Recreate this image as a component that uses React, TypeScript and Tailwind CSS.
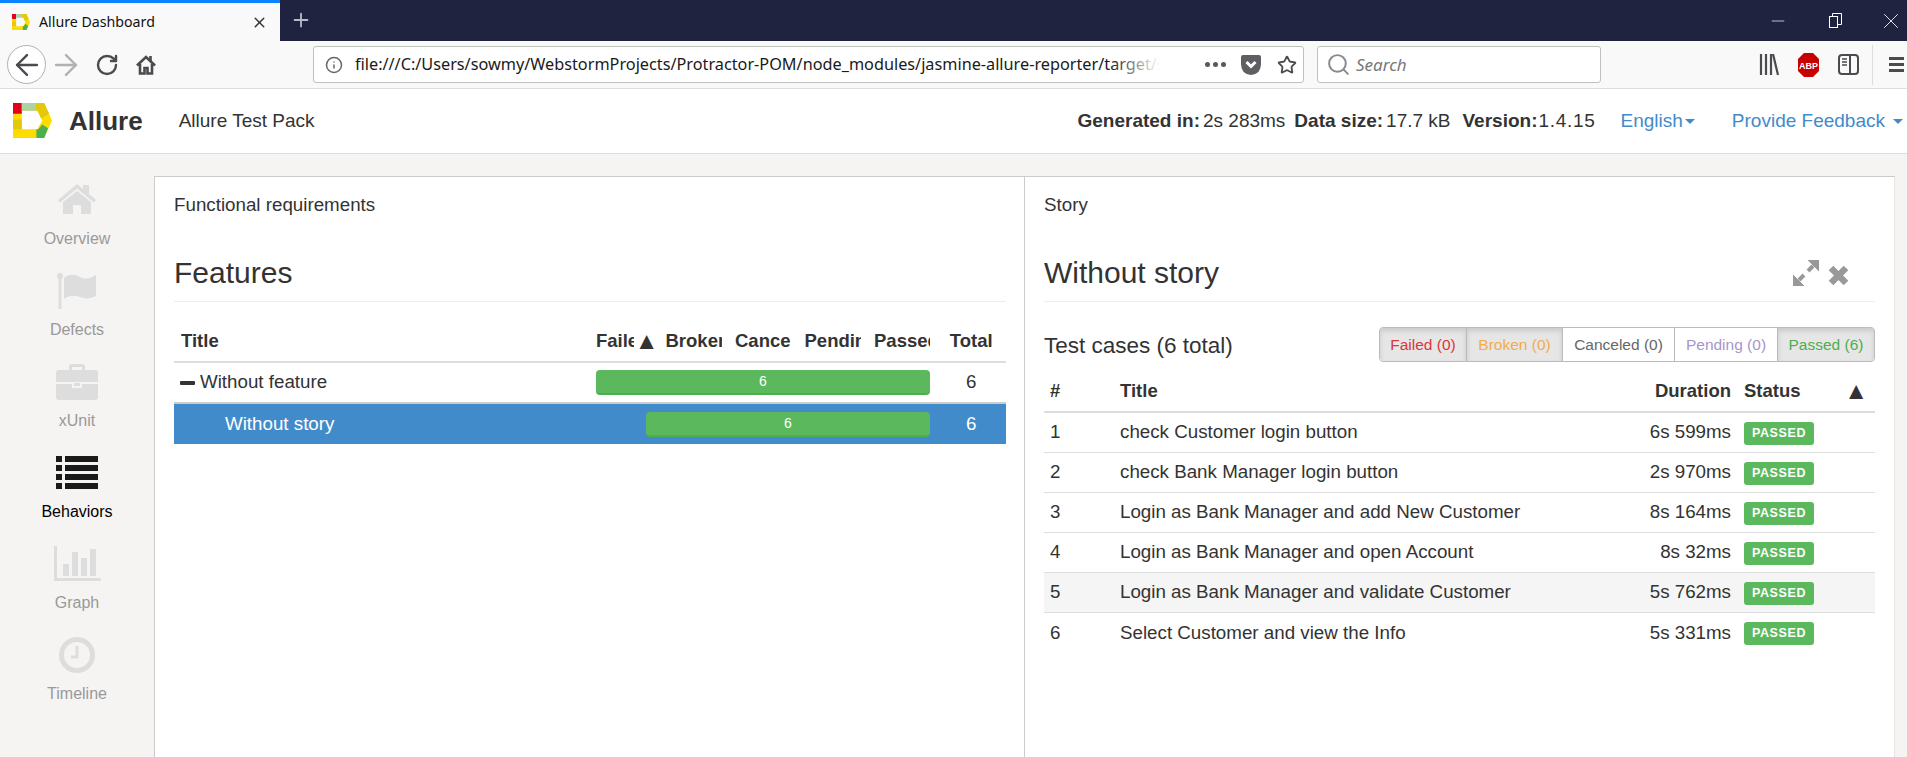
import { ArrowLeft, ArrowRight, RotateCw, Star, Search, Info, X, Plus, Minus } from 'lucide-react';

const sans = 'font-["Liberation_Sans",Arial,sans-serif]';

const cases = [
  ['1', 'check Customer login button', '6s 599ms'],
  ['2', 'check Bank Manager login button', '2s 970ms'],
  ['3', 'Login as Bank Manager and add New Customer', '8s 164ms'],
  ['4', 'Login as Bank Manager and open Account', '8s 32ms'],
  ['5', 'Login as Bank Manager and validate Customer', '5s 762ms'],
  ['6', 'Select Customer and view the Info', '5s 331ms'],
];

function Logo({ size }: { size: number }) {
  return (
    <svg width={size} height={size * 0.9} viewBox="0 0 40 36" className="shrink-0">
      <path d="M0 0 H32 L40 18 L32 36 H0 Z M9 8 V27 H25 L30 18 L25 8 Z" fill="#ffdc00" fillRule="evenodd" />
      <rect x="0" y="17" width="9" height="10" fill="#e3c80e" />
      <rect x="0" y="0" width="9" height="11" fill="#e3001b" />
      <rect x="9" y="0" width="14" height="8" fill="#aed2a8" />
      <polygon points="23,0 32,0 37,11 29,16 25,8 23,8" fill="#e3c80e" />
      <polygon points="24,36 24,27 26,27 30,22 36,26 32,36" fill="#4caf50" />
    </svg>
  );
}

function HomeIcon() {
  return (
    <svg width="38" height="31" viewBox="0 0 38 31" fill="#dddddd">
      <polygon points="0,16 19,0 25,5 25,1 31,1 31,10 38,16 36,18.5 19,4.5 2,18.5" />
      <path d="M5 18 L19 7 L33 18 V30 H23 V21 H15 V30 H5 Z" />
    </svg>
  );
}

function FlagIcon() {
  return (
    <svg width="40" height="36" viewBox="0 0 40 36" fill="#dddddd">
      <circle cx="3" cy="3" r="3" />
      <rect x="1.5" y="3" width="3" height="33" />
      <path d="M7 5 C12 1 18 1 23 4 C29 7 34 5 39 2 V23 C33 26 28 26 23 24 C17 22 12 22 7 26 Z" />
    </svg>
  );
}

function CaseIcon() {
  return (
    <svg width="42" height="36" viewBox="0 0 42 36" fill="#dddddd">
      <path d="M13 7 V3 Q13 0 16 0 H26 Q29 0 29 3 V7 H26 V3 H16 V7 Z" />
      <path d="M3 6 H39 Q42 6 42 9 V18 H0 V9 Q0 6 3 6 Z" />
      <path d="M0 20 H16 V24 H26 V20 H42 V33 Q42 36 39 36 H3 Q0 36 0 33 Z" />
      <rect x="18" y="19" width="6" height="3" />
    </svg>
  );
}

function ListIcon() {
  return (
    <svg width="42" height="33" viewBox="0 0 42 33" fill="#1a1a1a">
      {[0, 9, 18, 27].map((y) => (
        <g key={y}>
          <rect x="0" y={y} width="6" height="6" />
          <rect x="9" y={y} width="33" height="6" />
        </g>
      ))}
    </svg>
  );
}

function GraphIcon() {
  return (
    <svg width="47" height="35" viewBox="0 0 47 35" fill="#dddddd">
      <rect x="0" y="0" width="3" height="35" />
      <rect x="0" y="32" width="47" height="3" />
      <rect x="9" y="18" width="6" height="12" />
      <rect x="18" y="6" width="6" height="24" />
      <rect x="27" y="12" width="6" height="18" />
      <rect x="36" y="3" width="6" height="27" />
    </svg>
  );
}

function ClockIcon() {
  return (
    <svg width="36" height="36" viewBox="0 0 36 36" fill="none" stroke="#dddddd">
      <circle cx="18" cy="18" r="15.5" strokeWidth="5" />
      <path d="M18 9 V20 H12" strokeWidth="3" />
    </svg>
  );
}

function NavItem({ label, active, children }: { label: string; active?: boolean; children: React.ReactNode }) {
  return (
    <div className="flex h-[91px] flex-col items-center">
      <div className="flex h-[55px] items-center justify-center">{children}</div>
      <div className={`text-[16px] leading-[24px] ${active ? 'text-black' : 'text-[#999999]'}`}>{label}</div>
    </div>
  );
}

function Browser() {
  return (
    <>
      <div className="flex h-[41px] bg-[#20233f]">
        <div className="flex h-full w-[280px] items-center border-t-[3px] border-[#0a84ff] bg-[#f9f9fa] pl-[12px] pr-[12px]">
          <Logo size={18} />
          <span className='ml-[9px] flex-1 font-["Noto_Sans",sans-serif] text-[14.2px] text-[#111111]'>Allure Dashboard</span>
          <X size={17} className="text-[#333333]" />
        </div>
        <Plus size={22} className="ml-[10px] mt-[9px] text-[#b8bac6]" />
        <div className="ml-auto flex items-center pr-[3px] text-white">
          <Minus size={20} strokeWidth={0.85} />
          <svg width="13" height="15" viewBox="0 0 13 15" fill="none" stroke="white" className="ml-[41px]">
            <rect x="0.5" y="3.5" width="8" height="11" />
            <path d="M3.5 3 V0.5 H12.5 V11.5 H9" />
          </svg>
          <X size={26} strokeWidth={0.8} className="ml-[36px]" />
        </div>
      </div>
      <div className='flex h-[48px] items-center border-b border-[#dddddd] bg-[#f9f9fa] font-["Noto_Sans",sans-serif] text-[#4a4a4f]'>
        <div className="ml-[7px] flex h-[39px] w-[39px] items-center justify-center rounded-full border border-[#b1b1b3] bg-white">
          <ArrowLeft size={34} strokeWidth={1.7} />
        </div>
        <ArrowRight size={34} strokeWidth={1.7} className="ml-[3px] text-[#b1b1b3]" />
        <RotateCw size={24} strokeWidth={2.4} className="ml-[12px]" />
        <svg width="20" height="20" viewBox="0 0 20 20" className="ml-[17px]" fill="none" stroke="#4a4a4f" strokeWidth="2.6">
          <path d="M1 10.5 L10 2 L19 10.5" />
          <path d="M14.5 1 V6" />
          <path d="M4 9 V18.5 H8.5 V13 H11.5 V18.5 H16 V9" />
        </svg>
        <div className="relative ml-[157px] flex h-[37px] w-[991px] items-center rounded-[3px] border border-[#c0c0c0] bg-white">
          <Info size={18} className="ml-[11px] shrink-0 text-[#666666]" />
          <div className="relative ml-[12px] w-[805px] overflow-hidden whitespace-nowrap text-[16.25px] text-[#1a1a1a]">
            file:///C:/Users/sowmy/WebstormProjects/Protractor-POM/node_modules/jasmine-allure-reporter/target/site
            <div className="absolute right-0 top-0 h-full w-[50px] bg-gradient-to-r from-transparent to-white" />
          </div>
          <div className="ml-[45px] flex gap-[3px]">
            <span className="h-[5px] w-[5px] rounded-full bg-[#5a5a5e]" />
            <span className="h-[5px] w-[5px] rounded-full bg-[#5a5a5e]" />
            <span className="h-[5px] w-[5px] rounded-full bg-[#5a5a5e]" />
          </div>
          <svg width="20" height="20" viewBox="0 0 20 20" className="ml-[15px]">
            <path d="M2 0 H18 Q20 0 20 2 V9 Q20 19 10 20 Q0 19 0 9 V2 Q0 0 2 0 Z" fill="#5f5f63" />
            <path d="M5.5 7 L10 11.5 L14.5 7" fill="none" stroke="white" strokeWidth="3" />
          </svg>
          <Star size={20} strokeWidth={2.2} className="ml-[16px]" />
        </div>
        <div className="ml-[13px] flex h-[37px] w-[284px] items-center rounded-[3px] border border-[#c0c0c0] bg-white">
          <Search size={25} strokeWidth={1.9} className="ml-[8px] text-[#8a8a8a]" />
          <span className="ml-[5px] text-[17px] italic text-[#777777]">Search</span>
        </div>
        <svg width="20" height="21" viewBox="0 0 20 21" className="ml-[158px]" fill="none" stroke="#4a4a4f" strokeWidth="2.2">
          <path d="M2 0 V21 M7 0 V21 M12 0 V21 M14 0 L19 21" />
        </svg>
        <svg width="21" height="24" viewBox="0 0 21 24" className="ml-[19px]">
          <polygon points="6,0 15,0 21,6 21,18 15,24 6,24 0,18 0,6" fill="#c70000" />
          <text x="10.5" y="15.5" textAnchor="middle" fontSize="9" fontWeight="700" fill="white" fontFamily="Liberation Sans">ABP</text>
        </svg>
        <svg width="21" height="21" viewBox="0 0 21 21" className="ml-[19px]" fill="none" stroke="#4a4a4f" strokeWidth="2">
          <rect x="1" y="1" width="19" height="19" rx="3" />
          <path d="M12 1 V20" />
          <path d="M4 5 H9 M4 8 H9 M4 11 H9" strokeWidth="1.5" />
        </svg>
        <div className="ml-[13px] h-[40px] w-px bg-[#dddddd]" />
        <div className="ml-[16px] flex w-[15px] flex-col gap-[3px]">
          <div className="h-[3px] w-full bg-[#4a4a4f]" />
          <div className="h-[3px] w-full bg-[#4a4a4f]" />
          <div className="h-[3px] w-full bg-[#4a4a4f]" />
        </div>
      </div>
    </>
  );
}

function Header() {
  return (
    <div className="flex h-[65px] items-center border-b border-[#dddddd] bg-white pl-[13px] text-[#333333]">
      <Logo size={39} />
      <span className="ml-[17px] text-[26px] font-bold">Allure</span>
      <span className="ml-[36px] text-[19px]">Allure Test Pack</span>
      <div className="ml-auto flex items-center pr-[4px] text-[19px]">
        <b>Generated in:</b>
        <span className="ml-[3px]">2s 283ms</span>
        <b className="ml-[9px]">Data size:</b>
        <span className="ml-[3px]">17.7 kB</span>
        <b className="ml-[12px]">Version:</b>
        <span className="ml-[1px] tracking-[0.7px]">1.4.15</span>
        <span className="ml-[25px] text-[#428bca]">English</span>
        <span className="ml-[2px] h-0 w-0 border-x-[5px] border-t-[5px] border-x-transparent border-t-[#428bca]" />
        <span className="ml-[37px] text-[#428bca]">Provide Feedback</span>
        <span className="ml-[8px] h-0 w-0 border-x-[5px] border-t-[5px] border-x-transparent border-t-[#428bca]" />
      </div>
    </div>
  );
}

function Sidebar() {
  return (
    <div className="w-[154px] shrink-0 pt-[18px]">
      <NavItem label="Overview"><HomeIcon /></NavItem>
      <NavItem label="Defects"><FlagIcon /></NavItem>
      <NavItem label="xUnit"><CaseIcon /></NavItem>
      <NavItem label="Behaviors" active><ListIcon /></NavItem>
      <NavItem label="Graph"><GraphIcon /></NavItem>
      <NavItem label="Timeline"><ClockIcon /></NavItem>
    </div>
  );
}

function PanelTitle({ crumb, title, children }: { crumb: string; title: string; children?: React.ReactNode }) {
  return (
    <>
      <div className="mt-[15px] h-[26px] leading-[26px]">{crumb}</div>
      <div className="flex h-[84px] items-end justify-between border-b border-[#eeeeee] pb-[10px]">
        <h2 className="text-[30px] leading-[36px]">{title}</h2>
        {children}
      </div>
    </>
  );
}

function Bar({ width }: { width: string }) {
  return (
    <div className={`ml-auto flex h-[25px] items-center justify-center rounded-[4px] border-b-2 border-[#4cae4c] bg-[#5cb85c] text-[14px] text-white ${width}`}>
      6
    </div>
  );
}

function Features() {
  const row = 'grid grid-cols-[415px_repeat(5,69.5px)_1fr]';
  return (
    <div className="w-[870px] shrink-0 border-r border-[#cccccc] pl-[19px] pr-[18px]">
      <PanelTitle crumb="Functional requirements" title="Features" />
      <div className={`${row} h-[61px] items-end border-b-2 border-[#dddddd] pb-[6px] text-[18.5px] font-bold`}>
        <div className="pl-[7px]">Title</div>
        <div className="flex items-center pl-[7px]">
          <span className="w-[38px] overflow-hidden">Failed</span>
          <span className="ml-[1px] text-[24px] leading-[26px]">▲</span>
        </div>
        <div className="w-[63px] overflow-hidden whitespace-nowrap pl-[7px]">Broken</div>
        <div className="w-[63px] overflow-hidden whitespace-nowrap pl-[7px]">Canceled</div>
        <div className="w-[63px] overflow-hidden whitespace-nowrap pl-[7px]">Pending</div>
        <div className="w-[63px] overflow-hidden whitespace-nowrap pl-[7px]">Passed</div>
        <div className="text-center">Total</div>
      </div>
      <div className={`${row} h-[39px] items-center`}>
        <div className="flex items-center pl-[6px]">
          <span className="h-[4px] w-[15px] rounded-[1px] bg-[#333333]" />
          <span className="ml-[5px]">Without feature</span>
        </div>
        <div className="col-span-5 pl-[7px] pr-[6.5px]"><Bar width="w-[334px]" /></div>
        <div className="text-center">6</div>
      </div>
      <div className={`${row} h-[42px] items-center border-t-2 border-[#cccccc] bg-[#428bca] text-white`}>
        <div className="pl-[51px]">Without story</div>
        <div className="col-span-5 pl-[7px] pr-[6.5px]"><Bar width="w-[284px]" /></div>
        <div className="text-center">6</div>
      </div>
    </div>
  );
}

function Filter({ label, color, on, last }: { label: string; color: string; on?: boolean; last?: boolean }) {
  return (
    <div className={`flex items-center justify-center text-[15.5px] ${color} ${on ? 'bg-[#e6e6e6] shadow-[inset_0_3px_5px_rgba(0,0,0,0.125)]' : 'bg-white'} ${last ? '' : 'border-r border-[#bbbbbb]'}`}>
      {label}
    </div>
  );
}

function Story() {
  const row = 'grid grid-cols-[70px_523px_100px_139px]';
  return (
    <div className="w-[870px] shrink-0 border-r border-[#e6e6e6] px-[19px]">
      <PanelTitle crumb="Story" title="Without story">
        <div className="mb-[5px] flex items-center gap-[9px] pr-[26px]">
          <svg width="26" height="26" viewBox="0 0 26 26" fill="#999999" stroke="#999999">
            <polygon points="15,0 26,0 26,11" />
            <polygon points="0,15 0,26 11,26" />
            <path d="M20 6 L15 11 M6 20 L11 15" strokeWidth="4" />
          </svg>
          <svg width="21" height="21" viewBox="0 0 21 21" fill="none" stroke="#999999" strokeWidth="6.5" className="mt-[4px]">
            <path d="M3 3 L18 18 M18 3 L3 18" />
          </svg>
        </div>
      </PanelTitle>
      <div className="mt-[25px] flex h-[35px] items-center justify-between">
        <span className="pt-[2px] text-[22.5px]">Test cases (6 total)</span>
        <div className="grid h-full w-[496px] grid-cols-[87px_96px_112px_103px_1fr] overflow-hidden rounded-[4px] border border-[#bbbbbb]">
          <Filter label="Failed (0)" color="text-[#d9363a]" on />
          <Filter label="Broken (0)" color="text-[#f0ad4e]" on />
          <Filter label="Canceled (0)" color="text-[#666666]" />
          <Filter label="Pending (0)" color="text-[#a895cc]" />
          <Filter label="Passed (6)" color="text-[#4cae4c]" on last />
        </div>
      </div>
      <div className={`${row} h-[51px] items-end border-b-2 border-[#dddddd] pb-[6px] text-[18.5px] font-bold`}>
        <div className="pl-[6px]">#</div>
        <div className="pl-[6px]">Title</div>
        <div className="pr-[6px] text-right">Duration</div>
        <div className="flex items-center justify-between pl-[7px] pr-[8px]">
          <span>Status</span>
          <span className="text-[24px] leading-[26px]">▲</span>
        </div>
      </div>
      {cases.map(([id, name, time], i) => (
        <div key={id} className={`${row} h-[40px] items-center ${i < 5 ? 'border-b border-[#dddddd]' : ''} ${id === '5' ? 'bg-[#f5f5f5]' : ''}`}>
          <div className="pl-[6px]">{id}</div>
          <div className="pl-[6px]">{name}</div>
          <div className="pr-[6px] text-right">{time}</div>
          <div className="pl-[7px]">
            <span className="mt-[1px] flex h-[23px] w-[70px] items-center justify-center rounded-[3px] bg-[#5cb85c] text-[12.5px] font-bold tracking-[0.6px] text-white">
              PASSED
            </span>
          </div>
        </div>
      ))}
    </div>
  );
}

export default function App() {
  return (
    <div className={`flex h-[757px] w-[1907px] flex-col overflow-hidden bg-[#f5f4f3] ${sans} text-[18.75px] text-[#333333]`}>
      <Browser />
      <Header />
      <div className="flex flex-1 overflow-hidden">
        <Sidebar />
        <div className="mt-[22px] flex border-l border-t border-[#cccccc] bg-white">
          <Features />
          <Story />
        </div>
      </div>
    </div>
  );
}
